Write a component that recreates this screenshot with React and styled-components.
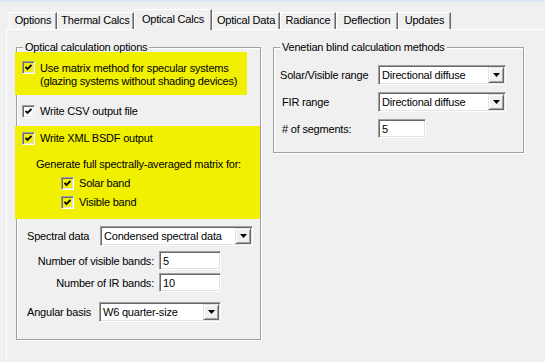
import React from "react";
import styled, { createGlobalStyle } from "styled-components";

const GlobalStyle = createGlobalStyle`
  html, body {
    margin: 0;
    padding: 0;
    background: #f0f0f0;
  }
  body {
    font-family: "Liberation Sans", Arial, sans-serif;
    font-size: 11px;
    letter-spacing: -0.2px;
    color: #000;
  }
`;

const Window = styled.div`
  width: 545px;
  height: 362px;
  overflow: hidden;
  background: #f0f0f0;
  border-top: 2px solid #dbe7f4;
  box-sizing: border-box;
  display: flex;
  flex-direction: column;
`;

const TabStrip = styled.div`
  display: flex;
  align-items: flex-end;
  height: 20px;
  margin-top: 7px;
  padding-left: 9px;
  position: relative;
  z-index: 1;
`;

const Tab = styled.div`
  box-sizing: border-box;
  width: ${(p) => p.$w}px;
  height: ${(p) => (p.$active ? 21 : 17)}px;
  margin-bottom: ${(p) => (p.$active ? -1 : 0)}px;
  padding-top: ${(p) => (p.$active ? 2 : 0)}px;
  line-height: 15px;
  text-align: center;
  white-space: nowrap;
  background: #f0f0f0;
  border-top: 1px solid #fff;
  border-left: 1px solid #fff;
  border-right: 1px solid #696969;
  box-shadow: inset -1px 0 0 #a0a0a0;
`;

const Panel = styled.div`
  flex: 1;
  margin-left: 6px;
  border-top: 1px solid #fff;
  border-left: 1px solid #fff;
  padding: 17px 0 0 9px;
  display: flex;
  align-items: flex-start;
  gap: 12px;
`;

const GroupBox = styled.div`
  position: relative;
  width: ${(p) => p.$w}px;
  box-sizing: border-box;
  border: 1px solid #a0a0a0;
  box-shadow: 1px 1px 0 #fff, inset 1px 1px 0 #fff;
  padding-bottom: ${(p) => p.$pb}px;
  display: flex;
  flex-direction: column;
`;

const Caption = styled.div`
  position: absolute;
  top: -7px;
  left: 6px;
  padding: 0 2px;
  line-height: 12px;
  background: linear-gradient(transparent 3px, #f0f0f0 3px, #f0f0f0 9px, transparent 9px);
  white-space: nowrap;
`;

const Highlight = styled.div`
  background: #f0f000;
  margin-left: -2px;
  margin-top: ${(p) => p.$mt}px;
  width: ${(p) => p.$w}px;
  box-sizing: border-box;
  padding: ${(p) => p.$pad};
  display: flex;
  flex-direction: column;
`;

const CheckRow = styled.div`
  display: flex;
  align-items: flex-start;
  gap: 5px;
  margin-top: ${(p) => p.$mt || 0}px;
  padding-left: ${(p) => p.$indent || 0}px;
`;

const Box = styled.div`
  width: 13px;
  height: 13px;
  flex: none;
  box-sizing: border-box;
  border: 1px solid;
  border-color: #a0a0a0 #fff #fff #a0a0a0;
  box-shadow: inset 1px 1px 0 #696969, inset -1px -1px 0 #e3e3e3;
  background: ${(p) => (p.$hl ? "#f0f000" : "#fff")};
  display: flex;
  align-items: center;
  justify-content: center;
`;

const CheckText = styled.div`
  line-height: 13px;
  margin-top: ${(p) => (p.$multi ? 1 : 0)}px;
`;

const Note = styled.div`
  line-height: 13px;
  margin-top: ${(p) => p.$mt}px;
  padding-left: ${(p) => p.$indent}px;
`;

const FieldRow = styled.div`
  display: flex;
  align-items: center;
  margin-top: ${(p) => p.$mt}px;
  padding-left: ${(p) => p.$indent}px;
`;

const Label = styled.div`
  width: ${(p) => p.$w}px;
  flex: none;
  text-align: ${(p) => (p.$right ? "right" : "left")};
  padding-right: ${(p) => (p.$right ? 5 : 0)}px;
  box-sizing: border-box;
  white-space: nowrap;
`;

const Sunken = styled.div`
  box-sizing: border-box;
  width: ${(p) => p.$w}px;
  height: ${(p) => p.$h}px;
  border: 1px solid;
  border-color: #a0a0a0 #fff #fff #a0a0a0;
  box-shadow: inset 1px 1px 0 #696969, inset -1px -1px 0 #e3e3e3;
  background: #fff;
  padding: 2px 2px 2px 3px;
  display: flex;
  align-items: center;
  white-space: nowrap;
`;

const ComboText = styled.span`
  flex: 1;
  line-height: 14px;
`;

const DropButton = styled.div`
  width: 16px;
  height: 16px;
  margin-right: -1px;
  flex: none;
  box-sizing: border-box;
  background: #f0f0f0;
  border: 1px solid;
  border-color: #e3e3e3 #696969 #696969 #e3e3e3;
  box-shadow: inset 1px 1px 0 #fff, inset -1px -1px 0 #a0a0a0;
  display: flex;
  align-items: center;
  justify-content: center;
`;

const Check = ({ checked, hl }) => (
  <Box $hl={hl}>
    {checked && (
      <svg width="7" height="7" viewBox="0 0 7 7">
        <polyline points="0.5,3 2.5,5 6.5,1" fill="none" stroke="#000" strokeWidth="1.8" />
      </svg>
    )}
  </Box>
);

const Combo = ({ value, w }) => (
  <Sunken $w={w} $h={20}>
    <ComboText>{value}</ComboText>
    <DropButton>
      <svg width="7" height="4" viewBox="0 0 7 4">
        <polygon points="0,0 7,0 3.5,4" fill="#000" />
      </svg>
    </DropButton>
  </Sunken>
);

const tabs = [
  ["Options", 48],
  ["Thermal Calcs", 77],
  ["Optical Calcs", 78, true],
  ["Optical Data", 68],
  ["Radiance", 56],
  ["Deflection", 62],
  ["Updates", 53],
];

export default function App() {
  return (
    <Window>
      <GlobalStyle />
      <TabStrip>
        {tabs.map(([t, w, active]) => (
          <Tab key={t} $w={w} $active={active}>
            {t}
          </Tab>
        ))}
      </TabStrip>
      <Panel>
        <GroupBox $w={245} $pb={17}>
          <Caption>Optical calculation options</Caption>
          <Highlight $mt={4} $w={232} $pad="9px 0 7px 7px">
            <CheckRow>
              <Check checked hl />
              <CheckText $multi>
                Use matrix method for specular systems
                <br />
                (glazing systems without shading devices)
              </CheckText>
            </CheckRow>
          </Highlight>
          <CheckRow $mt={10} $indent={5}>
            <Check checked />
            <CheckText>Write CSV output file</CheckText>
          </CheckRow>
          <Highlight $mt={8} $w={245} $pad="6px 0 10px 7px">
            <CheckRow>
              <Check checked hl />
              <CheckText>Write XML BSDF output</CheckText>
            </CheckRow>
            <Note $mt={13} $indent={14}>
              Generate full spectrally-averaged matrix for:
            </Note>
            <CheckRow $mt={6} $indent={39}>
              <Check checked hl />
              <CheckText>Solar band</CheckText>
            </CheckRow>
            <CheckRow $mt={6} $indent={39}>
              <Check checked hl />
              <CheckText>Visible band</CheckText>
            </CheckRow>
          </Highlight>
          <FieldRow $mt={7} $indent={10}>
            <Label $w={73}>Spectral data</Label>
            <Combo value="Condensed spectral data" w={153} />
          </FieldRow>
          <FieldRow $mt={5} $indent={0}>
            <Label $w={142} $right>
              Number of visible bands:
            </Label>
            <Sunken $w={62} $h={19}>5</Sunken>
          </FieldRow>
          <FieldRow $mt={3} $indent={0}>
            <Label $w={142} $right>
              Number of IR bands:
            </Label>
            <Sunken $w={62} $h={19}>10</Sunken>
          </FieldRow>
          <FieldRow $mt={10} $indent={10}>
            <Label $w={72}>Angular basis</Label>
            <Combo value="W6 quarter-size" w={122} />
          </FieldRow>
        </GroupBox>
        <GroupBox $w={251} $pb={14}>
          <Caption>Venetian blind calculation methods</Caption>
          <FieldRow $mt={17} $indent={6}>
            <Label $w={98}>Solar/Visible range</Label>
            <Combo value="Directional diffuse" w={128} />
          </FieldRow>
          <FieldRow $mt={7} $indent={8}>
            <Label $w={96}>FIR range</Label>
            <Combo value="Directional diffuse" w={128} />
          </FieldRow>
          <FieldRow $mt={7} $indent={8}>
            <Label $w={96}># of segments:</Label>
            <Sunken $w={48} $h={19}>5</Sunken>
          </FieldRow>
        </GroupBox>
      </Panel>
    </Window>
  );
}
